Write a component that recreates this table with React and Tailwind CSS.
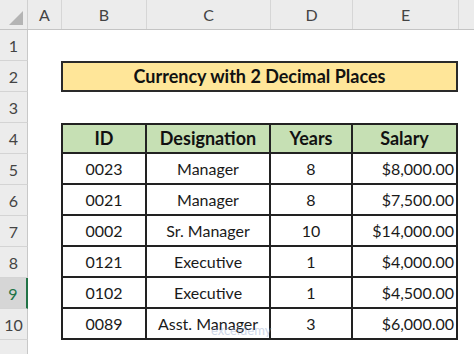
import React from "react";

const rows = [
  ["0023", "Manager", "8", "$8,000.00"],
  ["0021", "Manager", "8", "$7,500.00"],
  ["0002", "Sr. Manager", "10", "$14,000.00"],
  ["0121", "Executive", "1", "$4,000.00"],
  ["0102", "Executive", "1", "$4,500.00"],
  ["0089", "Asst. Manager", "3", "$6,000.00"],
];

function RowHead({ n, selected }) {
  return (
    <div
      className={
        "w-[28px] shrink-0 flex items-end justify-center pb-[2px] border-b border-[#d4d4d4] text-[16px] " +
        (selected
          ? "bg-[#d6d6d6] text-[#217346] border-r-2 border-r-[#217346]"
          : "bg-[#ececec] text-[#444] border-r border-r-[#c8c8c8]")
      }
    >
      {n}
    </div>
  );
}

export default function App() {
  const font = { fontFamily: "Lato, 'Open Sans', sans-serif" };
  return (
    <div className="w-[474px] h-[354px] overflow-hidden bg-white flex flex-col" style={font}>
      {/* column headers */}
      <div className="h-[30px] shrink-0 flex bg-[#ececec] border-b border-[#c4c4c4] text-[16px] text-[#444]">
        <div className="w-[28px] shrink-0 relative border-r border-[#d0d0d0]">
          <svg className="absolute right-[4px] bottom-[4px]" width="14" height="14" viewBox="0 0 14 14">
            <polygon points="14,0 14,14 0,14" fill="#b4b4b4" />
          </svg>
        </div>
        <div className="w-[34px] shrink-0 flex items-center justify-center border-r border-[#d6d6d6]">A</div>
        <div className="w-[85px] shrink-0 flex items-center justify-center border-r border-[#d6d6d6]">B</div>
        <div className="w-[124px] shrink-0 flex items-center justify-center border-r border-[#d6d6d6]">C</div>
        <div className="w-[82px] shrink-0 flex items-center justify-center border-r border-[#d6d6d6]">D</div>
        <div className="w-[106px] shrink-0 flex items-center justify-center border-r border-[#d6d6d6]">E</div>
        <div className="flex-1" />
      </div>

      {/* row 1 */}
      <div className="h-[31px] shrink-0 flex">
        <RowHead n={1} />
      </div>
      {/* row 2 - title */}
      <div className="h-[31px] shrink-0 flex">
        <RowHead n={2} />
        <div className="w-[34px] shrink-0" />
        <div className="w-[397px] shrink-0 bg-[#ffe699] border-2 border-[#2a2a2a] flex items-center justify-center text-[18px] font-bold text-[#111] ml-[-1px]">
          Currency with 2 Decimal Places
        </div>
      </div>
      {/* row 3 */}
      <div className="h-[31px] shrink-0 flex">
        <RowHead n={3} />
      </div>
      {/* row 4 - table header */}
      <div className="h-[31px] shrink-0 flex">
        <RowHead n={4} />
        <div className="w-[33px] shrink-0" />
        <div className="flex bg-[#c6e0b4] border-2 border-[#222] text-[18px] font-bold text-[#111]">
          <div className="w-[84px] flex items-center justify-center border-r-2 border-[#222]">ID</div>
          <div className="w-[124px] flex items-center justify-center border-r-2 border-[#222]">Designation</div>
          <div className="w-[82px] flex items-center justify-center border-r-2 border-[#222]">Years</div>
          <div className="w-[103px] flex items-center justify-center">Salary</div>
        </div>
      </div>
      {rows.map((r, i) => (
        <div key={i} className="h-[31px] shrink-0 flex">
          <RowHead n={5 + i} selected={i === 4} />
          <div className="w-[33px] shrink-0" />
          <div className="flex border-x-2 border-b-2 border-[#222] text-[16px] text-[#1a1a1a] mt-[-2px] pt-[2px] h-[33px]">
            <div className="w-[84px] flex items-center justify-center border-r-2 border-[#222]">{r[0]}</div>
            <div className="w-[124px] flex items-center justify-center border-r-2 border-[#222] relative">
              {r[1]}
              {i === 5 && (
                <span className="absolute left-[64px] top-[12px] text-[13px] text-[#8aa0c8] opacity-40 whitespace-nowrap">
                  exceldemy
                </span>
              )}
            </div>
            <div className="w-[82px] flex items-center justify-center border-r-2 border-[#222]">{r[2]}</div>
            <div className="w-[103px] flex items-center justify-end pr-[2px]">{r[3]}</div>
          </div>
        </div>
      ))}
      {/* row 11 */}
      <div className="flex-1 flex">
        <div className="w-[28px] shrink-0 bg-[#ececec] border-r border-[#c8c8c8]" />
      </div>
    </div>
  );
}
